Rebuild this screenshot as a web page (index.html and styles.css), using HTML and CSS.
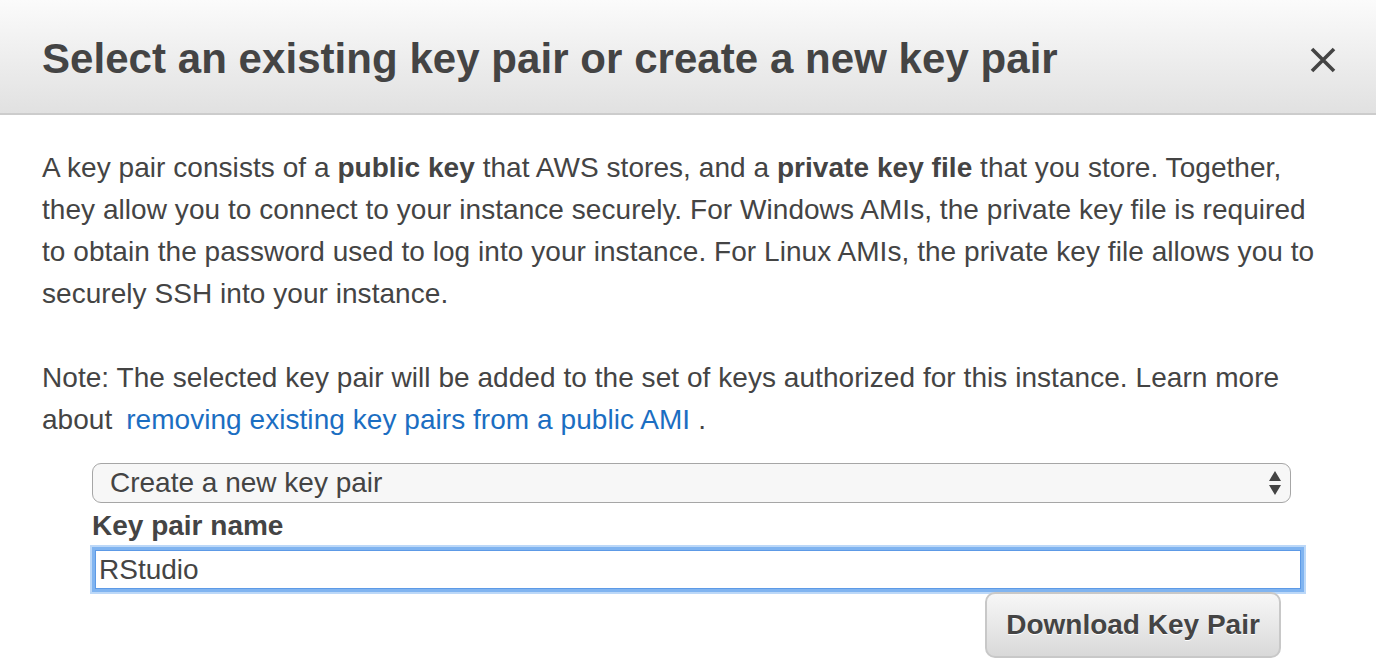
FILE: index.html
```html
<!DOCTYPE html>
<html lang="en">
<head>
<meta charset="utf-8">
<title>Select key pair</title>
<link rel="stylesheet" href="styles.css">
</head>
<body>
<div class="dialog">
  <header class="dialog-header">
    <h1 class="dialog-title">Select an existing key pair or create a new key pair</h1>
    <button class="close-btn" aria-label="Close">
      <svg width="26" height="26" viewBox="0 0 26 26"><path d="M2 2 L24 24 M24 2 L2 24" stroke="#444" stroke-width="3.6" stroke-linecap="butt"/></svg>
    </button>
  </header>
  <div class="dialog-body">
    <p class="para">A key pair consists of a <b>public key</b> that AWS stores, and a <b>private key file</b> that you store. Together,<br>they allow you to connect to your instance securely. For Windows AMIs, the private key file is required<br>to obtain the password used to log into your instance. For Linux AMIs, the private key file allows you to<br>securely SSH into your instance.</p>
    <p class="para note">Note: The selected key pair will be added to the set of keys authorized for this instance. Learn more<br>about <a class="link" href="#">removing existing key pairs from a public AMI</a>.</p>
    <div class="form">
      <div class="select">
        <span class="select-value">Create a new key pair</span>
        <svg class="select-arrows" width="14" height="26" viewBox="0 0 14 26"><path d="M7 1 L13 11 L1 11 Z M1 15 L13 15 L7 25 Z" fill="#444"/></svg>
      </div>
      <label class="label">Key pair name</label>
      <div class="input">RStudio</div>
      <div class="actions">
        <button class="download-btn">Download Key Pair</button>
      </div>
    </div>
  </div>
</div>
</body>
</html>
```

FILE: styles.css
```css
* { box-sizing: border-box; }
html, body { margin: 0; padding: 0; background: #fff; }
body {
  font-family: "Liberation Sans", Arial, sans-serif;
  color: #444;
  width: 1376px;
  height: 672px;
  overflow: hidden;
}
.dialog-header {
  height: 115px;
  background: linear-gradient(#fbfbfb, #e1e1e1);
  border-bottom: 2px solid #cccccc;
  display: flex;
  align-items: center;
  justify-content: space-between;
  padding: 0 40px 0 42px;
}
.dialog-title {
  margin: 0;
  font-size: 42px;
  font-weight: bold;
  color: #444;
  letter-spacing: 0.05px;
  padding-top: 5px;
}
.close-btn {
  background: none;
  border: 0;
  padding: 0;
  width: 26px;
  height: 26px;
  display: flex;
  margin-top: 6px;
}
.dialog-body {
  padding: 0 0 0 42px;
}
.para {
  margin: 0;
  font-size: 28px;
  line-height: 42px;
  letter-spacing: 0.05px;
}
.para:first-child { padding-top: 32px; }
.note { margin-top: 42px; }
.para b { font-weight: bold; }
.link { color: #1b6ec2; text-decoration: none; margin: 0 8px 0 6px; }
.form {
  margin-left: 50px;
  width: 1212px;
  padding-top: 22px;
}
.select {
  width: 1199px;
  height: 40px;
  border: 1.5px solid #a6a6a6;
  border-radius: 9px;
  background: #f7f7f7;
  display: flex;
  align-items: center;
  justify-content: space-between;
  padding: 0 8px 0 17px;
  font-size: 28px;
}
.label {
  display: block;
  font-size: 28px;
  font-weight: bold;
  line-height: 42px;
  margin-top: 2px;
}
.input {
  width: 1212px;
  height: 45px;
  border: 3px solid #80b4f0;
  box-shadow: 0 0 0 2px #bcd8f8, inset 0 0 0 1px #5d9ae6;
  background: #fff;
  font-size: 28px;
  line-height: 39px;
  padding-left: 4px;
}
.actions {
  display: flex;
  padding-left: 893px;
}
.download-btn {
  width: 296px;
  height: 66px;
  border: 2px solid #c8c8c8;
  border-radius: 10px;
  background: linear-gradient(#f7f7f7, #d9d9d9);
  font-family: "Liberation Sans", Arial, sans-serif;
  font-size: 28px;
  font-weight: bold;
  color: #444;
  text-shadow: 0 1px 0 #fff;
  padding: 0;
}
```
